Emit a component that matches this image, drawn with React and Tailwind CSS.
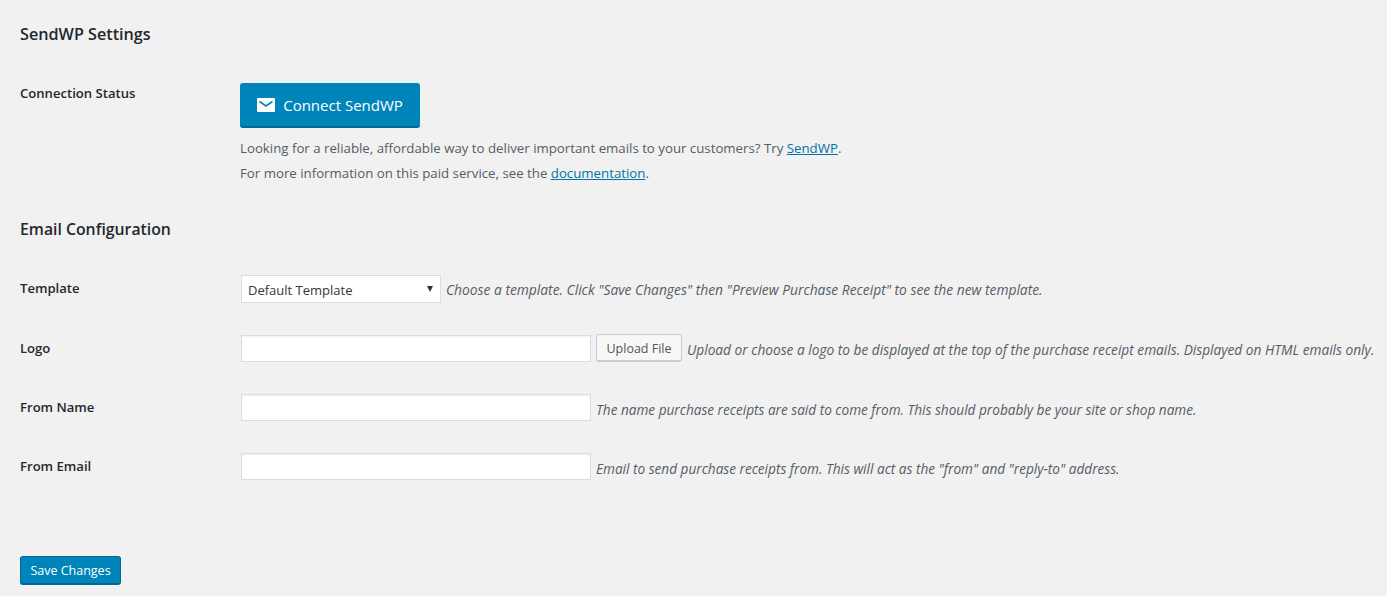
const inputClass =
  "-mt-[3px] h-[27px] w-[350px] shrink-0 border border-[#ddd] bg-white shadow-[inset_0_1px_2px_rgba(0,0,0,0.07)]";
const hintClass = "ml-[5px] italic leading-[20px] text-[#555d66]";
const linkClass = "text-[#0073aa] underline";
const noteClass = "whitespace-nowrap text-[13.25px] leading-[25px] text-[#555d66]";
const labelClass = "shrink-0 text-[13.1px] font-semibold leading-[20px] text-[#23282d]";

function Row({ label, children, className }) {
  return (
    <div className={`flex ${className}`}>
      <div className={`w-[221px] ${labelClass}`}>{label}</div>
      <div className="flex min-w-0 items-start whitespace-nowrap">{children}</div>
    </div>
  );
}

export default function App() {
  return (
    <div className="h-[596px] overflow-hidden bg-[#f1f1f1] px-5 font-['Open_Sans',sans-serif] text-[#444]">
      <h2 className="pt-[23px] text-[16.2px] font-semibold leading-[22px] text-[#23282d]">
        SendWP Settings
      </h2>

      <div className="mt-[38px] flex">
        <div className={`w-[220px] ${labelClass}`}>Connection Status</div>
        <div>
          <button className="flex h-[45px] w-[180px] items-center justify-center gap-[8px] rounded-[3px] border-b-2 border-[#006799] bg-[#0085ba] text-[15px] text-white">
            <svg width="18" height="14" viewBox="0 0 18 14">
              <path d="M1 0h16a1 1 0 0 1 1 1v12a1 1 0 0 1-1 1H1a1 1 0 0 1-1-1V1a1 1 0 0 1 1-1z" fill="#fff" />
              <path d="M2.5 3.5 9 8l6.5-4.5" fill="none" stroke="#0085ba" strokeWidth="1.6" />
            </svg>
            <span className="pt-[2px]">Connect SendWP</span>
          </button>
          <p className={`mt-[8px] ${noteClass}`}>
            Looking for a reliable, affordable way to deliver important emails to your customers? Try{" "}
            <a className={linkClass}>SendWP</a>.
          </p>
          <p className={noteClass}>
            For more information on this paid service, see the{" "}
            <a className={linkClass}>documentation</a>.
          </p>
        </div>
      </div>

      <h2 className="mt-[32px] text-[15.8px] font-semibold leading-[22px] text-[#23282d]">
        Email Configuration
      </h2>

      <Row label="Template" className="mt-[38px]">
        <div className="relative -mt-[3px] flex h-[28px] w-[200px] shrink-0 items-center border border-[#ddd] bg-white pl-[6px] pt-[4px] text-[13px] text-[#32373c]">
          Default Template
          <span className="absolute right-[7px] top-[10px] h-0 w-0 border-x-[3px] border-t-[6px] border-x-transparent border-t-[#333]" />
        </div>
        <span className={`mt-[2px] text-[13.8px] ${hintClass}`}>
          Choose a template. Click "Save Changes" then "Preview Purchase Receipt" to see the new template.
        </span>
      </Row>

      <Row label="Logo" className="mt-[35px]">
        <div className={inputClass} />
        <button className="ml-[5px] -mt-[4px] h-[28px] w-[86px] shrink-0 rounded-[3px] border border-b-2 border-[#ccc] bg-[#f7f7f7] pt-[2px] text-[12.5px] leading-[18px] text-[#555]">
          Upload File
        </button>
        <span className={`mt-[2px] text-[13.7px] ${hintClass}`}>
          Upload or choose a logo to be displayed at the top of the purchase receipt emails. Displayed on HTML emails only.
        </span>
      </Row>

      <Row label="From Name" className="mt-[35px]">
        <div className={inputClass} />
        <span className={`mt-[3px] text-[13.62px] ${hintClass}`}>
          The name purchase receipts are said to come from. This should probably be your site or shop name.
        </span>
      </Row>

      <Row label="From Email" className="mt-[35px]">
        <div className={inputClass} />
        <span className={`mt-[3px] text-[13.62px] ${hintClass}`}>
          Email to send purchase receipts from. This will act as the "from" and "reply-to" address.
        </span>
      </Row>

      <button className="mt-[76px] h-[29px] w-[101px] rounded-[3px] border border-b-2 border-[#006799] bg-[#0085ba] pt-[2px] text-[12.5px] leading-[18px] text-white">
        Save Changes
      </button>
    </div>
  );
}
